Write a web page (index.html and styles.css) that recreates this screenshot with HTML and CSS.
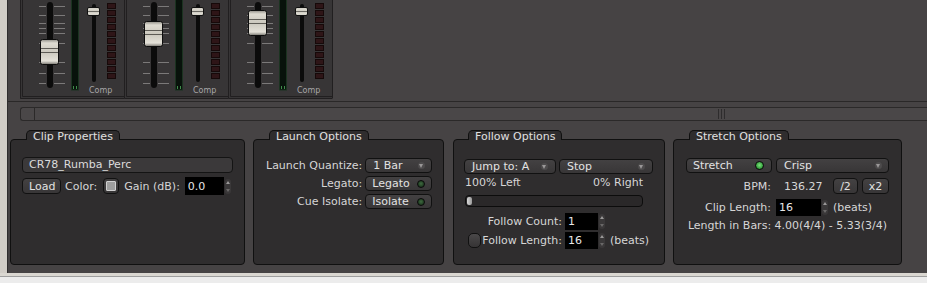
FILE: index.html
```html
<!DOCTYPE html>
<html>
  <head>
    <link rel="stylesheet" href="styles.css">
  </head>
  <body>
    <div id="frame">
      <div id="main">
        <div id="mixer">
          <svg class="strip" width="104" height="99" viewBox="0 0 104 99">
            <defs>
              <linearGradient id="cap-face" x1="0" y1="0" x2="0" y2="1">
                <stop offset="0" stop-color="#8f8d86"/>
                <stop offset="0.14" stop-color="#dedbd1"/>
                <stop offset="0.5" stop-color="#cbc8be"/>
                <stop offset="0.86" stop-color="#e4e1d8"/>
                <stop offset="1" stop-color="#75736d"/>
              </linearGradient>
              <g id="strip-base">
                <rect x="0" y="0" width="104" height="99" fill="#373536"/>
                <path d="M0.5 0V98.5H104M2.5 0V96.5H104" stroke="#211f20" fill="none"/>
                <path d="M19 6.5h7M34 6.5h11M19 15.5h7M34 15.5h11M19 23.5h7M34 23.5h11M19 28.5h7M34 28.5h11M19 33.5h7M34 33.5h11M19 43.5h7M34 43.5h11M19 62.5h7M34 62.5h11M19 73.5h7M34 73.5h11M19 83.5h7M34 83.5h11" stroke="#7b7979"/>
                <rect x="27" y="2" width="6" height="86" rx="3" fill="#0b0b0b"/>
                <rect x="51.5" y="-1" width="7" height="91" fill="#08120b" stroke="#1b3320"/>
                <path d="M53.5 86v3M56.5 86v3" stroke="#3f8c4a"/>
                <rect x="72" y="4" width="4" height="78" rx="2" fill="#0b0b0b"/>
                <rect x="67.5" y="7.5" width="12" height="8" rx="1.5" fill="url(#cap-face)" stroke="#111"/>
                <path d="M68 11.5h11" stroke="#6a6862"/>
                <g fill="#2e1517" stroke="#160909">
                  <rect x="87.5" y="3.5" width="8" height="5"/>
                  <rect x="87.5" y="10.5" width="8" height="5"/>
                  <rect x="87.5" y="17.5" width="8" height="5"/>
                  <rect x="87.5" y="24.5" width="8" height="5"/>
                  <rect x="87.5" y="31.5" width="8" height="5"/>
                  <rect x="87.5" y="38.5" width="8" height="5"/>
                  <rect x="87.5" y="45.5" width="8" height="5"/>
                  <rect x="87.5" y="52.5" width="8" height="5"/>
                  <rect x="87.5" y="59.5" width="8" height="5"/>
                  <rect x="87.5" y="66.5" width="8" height="5"/>
                  <rect x="87.5" y="73.5" width="8" height="5"/>
                </g>
                <text x="69" y="93" font-size="8" fill="#a7a7a7" font-family="DejaVu Sans">Comp</text>
              </g>
              <g id="fader-cap">
                <rect x="20.5" y="0.5" width="18" height="25" rx="2" fill="url(#cap-face)" stroke="#0d0d0d"/>
                <path d="M21 9.5h17M21 13.5h17" stroke="#5d5b55"/>
              </g>
            </defs>
            <use href="#strip-base"/>
            <use href="#fader-cap" y="39"/>
          </svg>
          <svg class="strip" width="104" height="99" viewBox="0 0 104 99">
            <use href="#strip-base"/>
            <use href="#fader-cap" y="21"/>
          </svg>
          <svg class="strip" width="106" height="99" viewBox="0 0 106 99">
            <use href="#strip-base"/>
            <use href="#fader-cap" y="10"/>
            <path d="M104.5 0V98.5" stroke="#211f20"/>
          </svg>
        </div>

        <div id="hscroll">
          <div class="scroll-btn"></div>
          <div class="scroll-thumb"><span class="grip"></span></div>
        </div>

        <div id="panels">
          <div class="group clip-group">
            <div class="tab">Clip Properties</div>
            <div class="box clip-box">
              <div class="field">CR78_Rumba_Perc</div>
              <div class="clip-row">
                <div class="btn load-btn">Load</div>
                <span class="color-label">Color:</span>
                <div class="btn swatch"><span class="swatch-chip"></span></div>
                <span class="gain-label">Gain (dB):</span>
                <div class="spin gain-spin">0.0</div>
                <div class="arrows"><i class="up"></i><i class="down"></i></div>
              </div>
            </div>
          </div>

          <div class="group launch-group">
            <div class="tab">Launch Options</div>
            <div class="box launch-box">
              <span class="label">Launch Quantize:</span>
              <div class="btn combo">1 Bar<span class="caret"></span></div>
              <span class="label">Legato:</span>
              <div class="btn toggle">Legato<span class="led"></span></div>
              <span class="label">Cue Isolate:</span>
              <div class="btn toggle">Isolate<span class="led"></span></div>
            </div>
          </div>

          <div class="group follow-group">
            <div class="tab">Follow Options</div>
            <div class="box follow-box">
              <div class="combo-row">
                <div class="btn combo jump">Jump to: A<span class="caret"></span></div>
                <div class="btn combo stop">Stop<span class="caret"></span></div>
              </div>
              <div class="chance-row">
                <span>100% Left</span>
                <span>0% Right</span>
              </div>
              <div class="slider"><span class="handle"></span></div>
              <div class="count-grid">
                <span class="label">Follow Count:</span>
                <div class="spin">1</div>
                <div class="arrows"><i class="up"></i><i class="down"></i></div>
                <span></span>
                <span class="label with-check"><span class="check"></span>Follow Length:</span>
                <div class="spin">16</div>
                <div class="arrows"><i class="up"></i><i class="down"></i></div>
                <span class="unit">(beats)</span>
              </div>
            </div>
          </div>

          <div class="group stretch-group">
            <div class="tab">Stretch Options</div>
            <div class="box stretch-box">
              <div class="btn toggle stretch-btn">Stretch<span class="led on"></span></div>
              <div class="btn combo">Crisp<span class="caret"></span></div>
              <span class="label">BPM:</span>
              <div class="bpm-cell">
                <span class="bpm">136.27</span>
                <div class="btn half">/2</div>
                <div class="btn double">x2</div>
              </div>
              <span class="label">Clip Length:</span>
              <div class="len-cell">
                <div class="spin len-spin">16</div>
                <div class="arrows"><i class="up"></i><i class="down"></i></div>
                <span class="unit">(beats)</span>
              </div>
              <div class="bars">Length in Bars: 4.00(4/4) - 5.33(3/4)</div>
            </div>
          </div>
        </div>
      </div>
    </div>
    <div id="statusbar"></div>
  </body>
</html>
```

FILE: styles.css
```css
body {
  margin: 0;
  width: 927px;
  height: 283px;
  overflow: hidden;
  background: #ececec;
  font-family: "DejaVu Sans", sans-serif;
  font-size: 11px;
  color: #d6d6d6;
}

#frame {
  height: 273px;
  padding-left: 7px;
  box-sizing: border-box;
  background: #d1cdc7;
}

#main {
  height: 100%;
  background: #464344;
  border-left: 1px solid #2f2d2e;
  overflow: hidden;
}

#statusbar {
  height: 10px;
  box-sizing: border-box;
  border-top: 3px solid #dad7d1;
  background: linear-gradient(#9e9e9e 0 1px, #ececec 1px);
}

/* mixer strips */

#mixer {
  display: flex;
  height: 101px;
  padding-left: 12px;
  border-bottom: 1px solid #2a2828;
  overflow: hidden;
}

.strip {
  display: block;
  flex: none;
}

#hscroll {
  display: flex;
  height: 14px;
  margin: 5px 0 0 12px;
  box-sizing: border-box;
  border: 1px solid #2b2929;
  border-right: none;
  border-radius: 3px 0 0 3px;
  background: #4a4748;
}

.scroll-btn {
  width: 13px;
  border-right: 1px solid #2b2929;
}

.scroll-thumb {
  flex: 1;
  display: flex;
  align-items: center;
  padding-left: 683px;
}

.grip {
  width: 8px;
  height: 10px;
  background: repeating-linear-gradient(90deg, #2e2c2d 0 1px, transparent 1px 3px);
}

/* option groups */

#panels {
  display: flex;
  margin-top: 9px;
  padding-left: 2px;
}

.group {
  display: flex;
  flex-direction: column;
  flex: none;
}

.clip-group { width: 235px; }
.launch-group { width: 191px; margin-left: 8px; }
.follow-group { width: 212px; margin-left: 9px; }
.stretch-group { width: 229px; margin-left: 8px; }

.tab {
  align-self: flex-start;
  position: relative;
  z-index: 1;
  height: 10px;
  box-sizing: border-box;
  margin: 0 0 -1px 16px;
  padding: 0 6px;
  line-height: 12px;
  border: 1px solid #101010;
  border-bottom: none;
  border-radius: 5px 5px 0 0;
  background: #2f2d2e;
  color: #e0e0e0;
  white-space: nowrap;
}

.follow-group .tab { margin-left: 15px; }

.box {
  height: 126px;
  box-sizing: border-box;
  border: 1px solid #101010;
  border-radius: 4px;
  background: #2f2d2e;
}

.label {
  text-align: right;
  white-space: nowrap;
}

.btn {
  display: flex;
  align-items: center;
  box-sizing: border-box;
  height: 15px;
  padding: 0 6px;
  border: 1px solid #111;
  border-radius: 4px;
  background: linear-gradient(#434142, #383637);
  color: #e2e2e2;
  white-space: nowrap;
}

.combo { padding-left: 7px; }

.caret {
  margin-left: auto;
  width: 7px;
  height: 7px;
  border-radius: 50%;
  background: #4d4b4c;
  position: relative;
}

.caret::after {
  content: "";
  position: absolute;
  left: 1px;
  top: 2px;
  border-left: 2.5px solid transparent;
  border-right: 2.5px solid transparent;
  border-top: 4px solid #9a9898;
}

.led {
  margin-left: auto;
  width: 8px;
  height: 8px;
  box-sizing: border-box;
  border-radius: 50%;
  border: 1px solid #0a0a0a;
  background: radial-gradient(circle at 50% 45%, #3f6a40, #1e3a20 70%);
}

.led.on {
  background: radial-gradient(circle at 50% 45%, #7fe27f, #2e9a36 70%);
}

.spin {
  display: flex;
  align-items: center;
  box-sizing: border-box;
  height: 17px;
  padding-left: 3px;
  background: #000;
  color: #e8e8e8;
}

.arrows {
  display: flex;
  flex-direction: column;
  justify-content: space-between;
  align-items: center;
  width: 6px;
  height: 15px;
  margin-left: 1px;
  padding: 2px 0;
  box-sizing: border-box;
  border-radius: 3px;
  background: #3a3839;
}

.arrows i {
  border-left: 2px solid transparent;
  border-right: 2px solid transparent;
}

.arrows .up { border-bottom: 3px solid #9a9898; }
.arrows .down { border-top: 3px solid #6a6868; }

.unit { white-space: nowrap; }

/* clip properties */

.clip-box {
  padding: 17px 11px 0 11px;
}

.field {
  height: 16px;
  box-sizing: border-box;
  padding-left: 6px;
  line-height: 14px;
  border: 1px solid #141414;
  border-radius: 4px;
  background: #3b393a;
  color: #dcdcdc;
}

.clip-row {
  display: flex;
  align-items: center;
  height: 18px;
  margin-top: 4px;
}

.load-btn {
  width: 39px;
  height: 16px;
}

.color-label { margin-left: 4px; }

.swatch {
  width: 16px;
  height: 16px;
  margin-left: 6px;
  padding: 0;
  justify-content: center;
}

.swatch-chip {
  width: 8px;
  height: 8px;
  border: 1px solid #d0d0d0;
  border-radius: 1px;
  background: #9e9e9e;
}

.gain-label { margin-left: 5px; }

.gain-spin {
  width: 39px;
  height: 18px;
  margin-left: 5px;
}

/* launch options */

.launch-box {
  display: grid;
  grid-template-columns: 1fr 67px;
  grid-auto-rows: 15px;
  column-gap: 3px;
  row-gap: 3px;
  align-content: start;
  align-items: center;
  padding: 18px 11px 0 12px;
}

/* follow options */

.follow-box {
  padding: 19px 11px 0 10px;
}

.combo-row {
  display: flex;
  gap: 3px;
}

.jump { width: 92px; }
.stop { flex: 1; }

.combo-row .caret { margin-right: 1px; }

.chance-row {
  display: flex;
  justify-content: space-between;
  margin: 2px 10px 0 1px;
  line-height: 14px;
}

.slider {
  height: 12px;
  margin: 5px 10px 0 1px;
  box-sizing: border-box;
  border: 1px solid #0c0c0c;
  border-radius: 4px;
  background: #2a2829;
  padding: 1px;
}

.handle {
  display: block;
  width: 5px;
  height: 8px;
  border-radius: 2px;
  background: linear-gradient(90deg, #d8d8d8, #9a9a9a);
}

.count-grid {
  display: grid;
  grid-template-columns: 100px 33px 9px auto;
  grid-auto-rows: 17px;
  row-gap: 2px;
  align-items: center;
  margin: 6px 0 0 1px;
}

.count-grid .label { padding-right: 3px; }

.count-grid .unit { padding-left: 3px; }

.with-check {
  display: flex;
  align-items: center;
  justify-content: space-between;
  padding-left: 3px;
}

.check {
  width: 13px;
  height: 15px;
  box-sizing: border-box;
  border: 1px solid #111;
  border-radius: 5px;
  background: linear-gradient(#4a4849, #363435);
}

/* stretch options */

.stretch-box {
  display: grid;
  grid-template-columns: 86px 1fr;
  grid-template-rows: 15px 16px 17px auto;
  column-gap: 4px;
  row-gap: 5px;
  align-content: start;
  align-items: center;
  padding: 18px 12px 0 12px;
}

.stretch-btn .led { margin-right: 1px; width: 9px; height: 9px; }

.stretch-box .label { padding-right: 1px; }

.bpm-cell {
  display: flex;
  align-items: center;
}

.bpm { margin-left: 8px; margin-right: auto; }

.half, .double {
  height: 16px;
  justify-content: center;
  padding: 0;
}

.half { width: 25px; }
.double { width: 27px; margin-left: 4px; }

.len-cell {
  display: flex;
  align-items: center;
}

.len-spin { width: 45px; }

.len-cell .unit { margin-left: 5px; }

.bars {
  grid-column: 1 / 3;
  margin-top: -2px;
  text-align: center;
  white-space: nowrap;
}
```
